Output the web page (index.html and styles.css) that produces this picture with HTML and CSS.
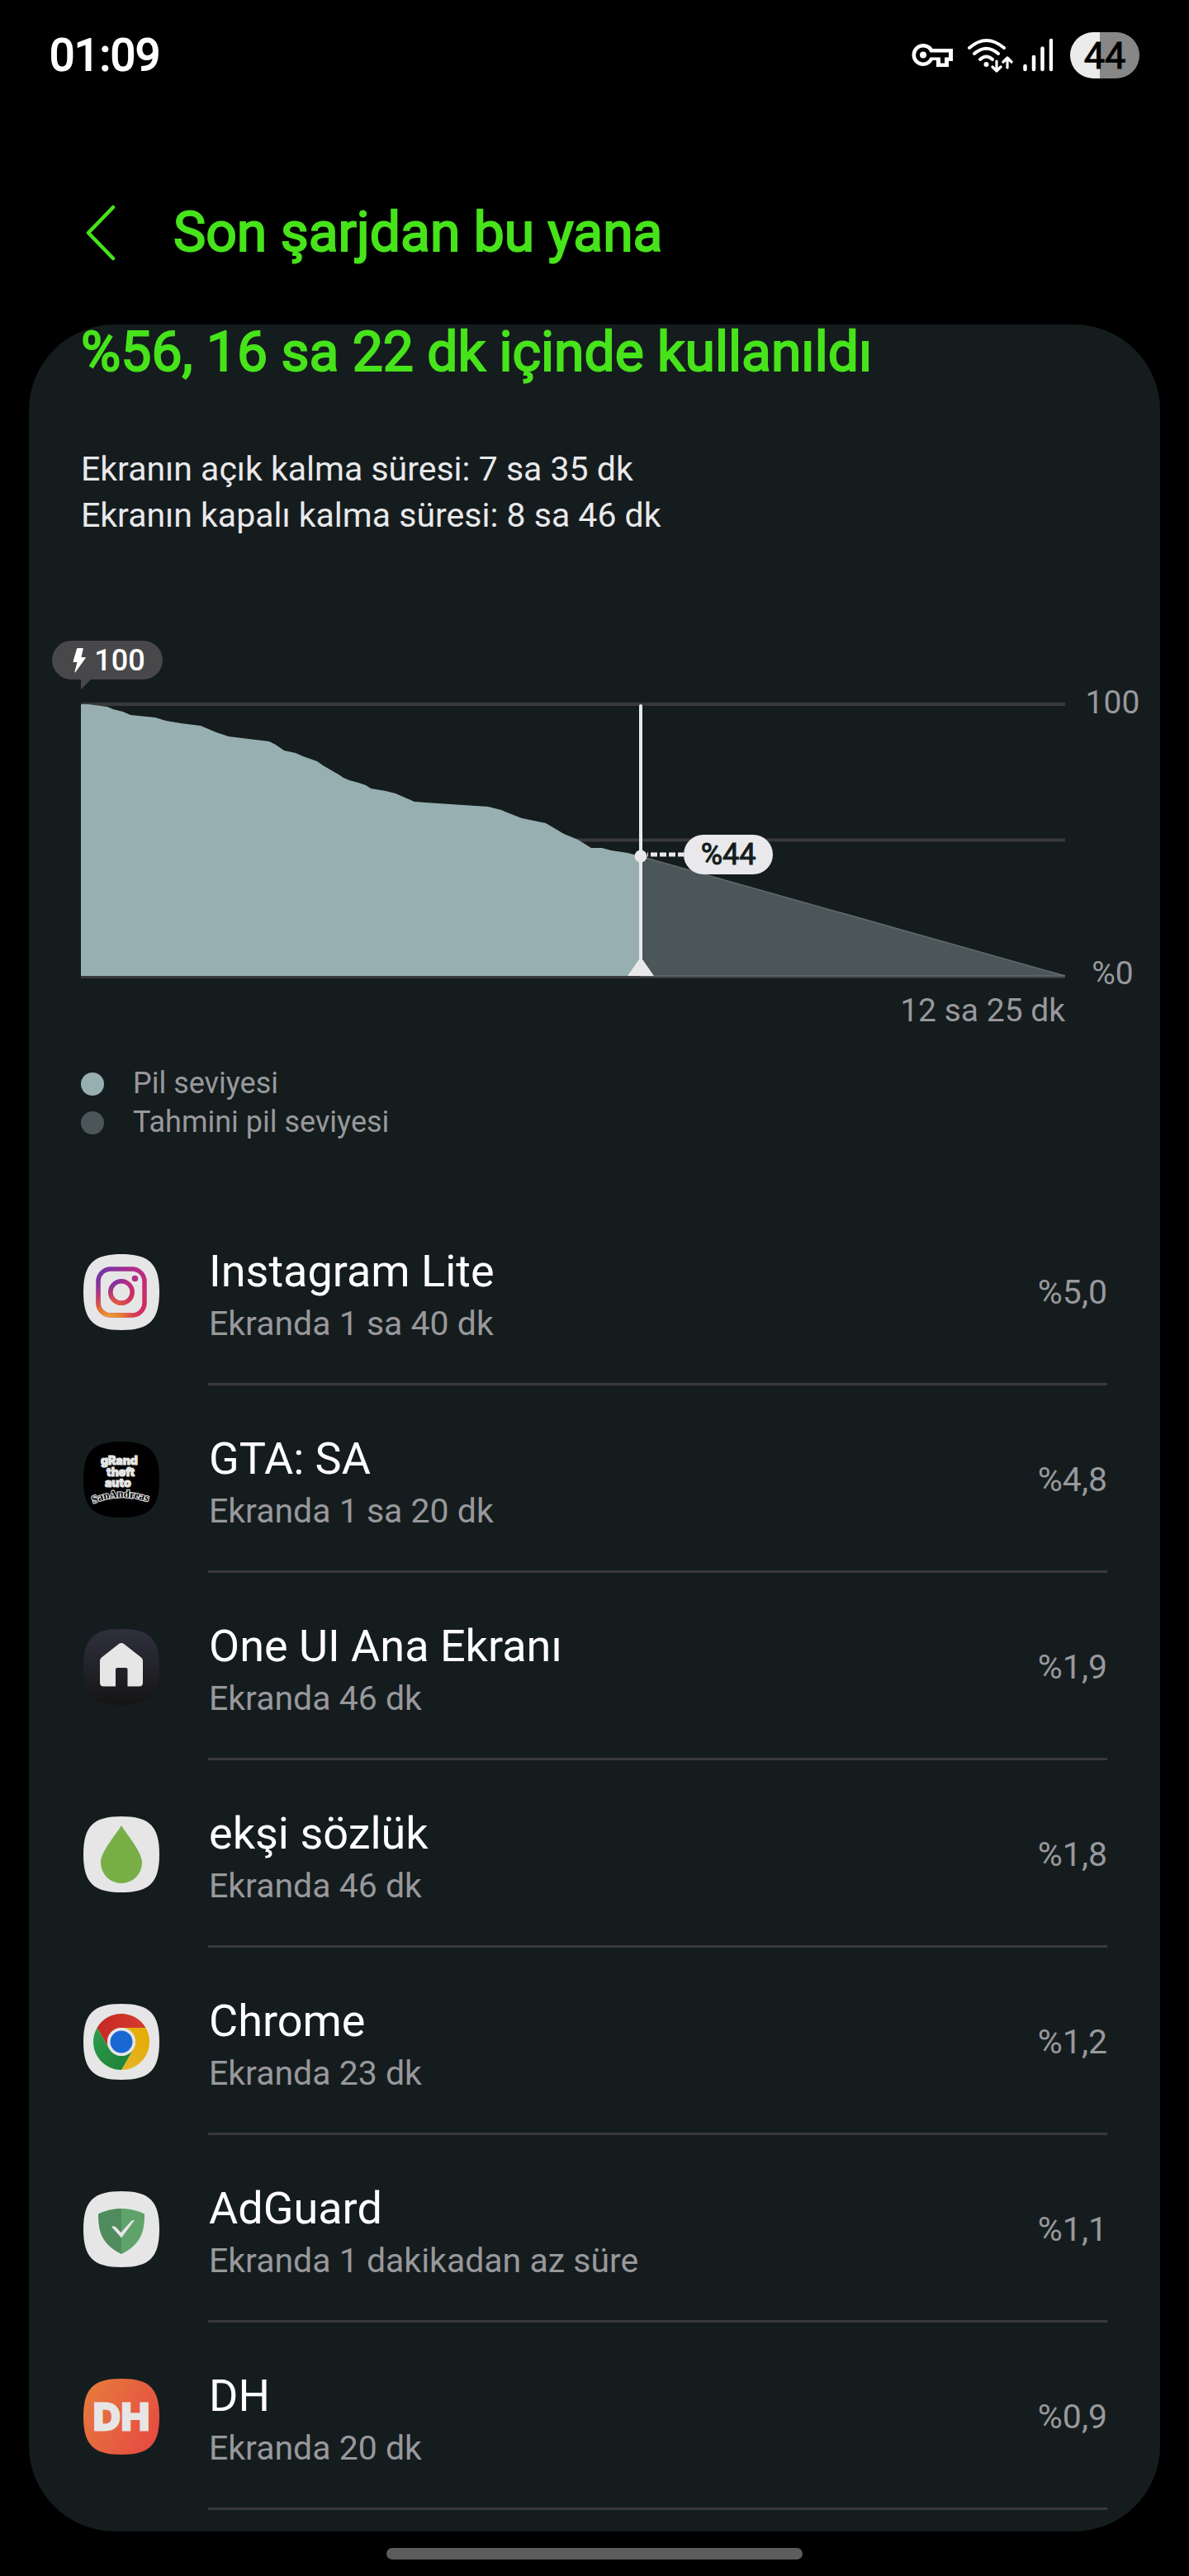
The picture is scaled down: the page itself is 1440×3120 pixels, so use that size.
FILE: index.html
```html
<!DOCTYPE html>
<html lang="tr">
<head>
<meta charset="utf-8">
<meta name="viewport" content="width=device-width, initial-scale=1">
<title>Son şarjdan bu yana</title>
<link rel="stylesheet" href="styles.css">
</head>
<body>
<div class="screen">
  <header class="status">
    <time class="clock">01:09</time>
    <div class="status-icons">
      <svg class="icon-key" viewBox="0 0 50 30" width="50" height="30" aria-hidden="true">
        <path fill="#fff" fill-rule="evenodd" d="M14 1c5 0 9.500 2.500 11.500 6H50v15h-5v7H30v-8h-4.500C23.500 25 19 28 14 28A13.500 13.500 0 0 1 14 1zM14 5.500a9 9 0 1 0 8.500 12H35v7h5V17.500h5V11.500H22.500A9 9 0 0 0 14 5.500z"/>
        <circle cx="14" cy="14.500" r="4" fill="#fff"/>
      </svg>
      <svg class="icon-wifi" viewBox="0 0 56 42" width="56" height="42" aria-hidden="true">
        <g fill="none" stroke="#fff" stroke-width="4" stroke-linecap="round">
          <path d="M3 12Q23.500-6 45 12M9 19Q23.500 6.500 38 19M16 26Q23.500 19 31 26"/>
          <path stroke-width="3.200" stroke-linejoin="round" d="M36 28v12m-5-5l5 5 5-5M49 36V24m-5 5l5-5 5 5"/>
        </g>
        <circle cx="23.500" cy="32" r="3" fill="#fff"/>
      </svg>
      <svg class="icon-signal" viewBox="0 0 36 42" width="36" height="42" aria-hidden="true">
        <path d="M2.500 34v4M13 23v15M23.500 12.500V38M34 3v35" stroke="#fff" stroke-width="4.500" stroke-linecap="round"/>
      </svg>
      <span class="battery">44</span>
    </div>
  </header>

  <div class="appbar">
    <button class="back" type="button" aria-label="Geri">
      <svg viewBox="0 0 40 68" width="40" height="68" aria-hidden="true"><path d="M37 3L7 34l30 31" fill="none" stroke="#47e31b" stroke-width="4.500" stroke-linecap="round" stroke-linejoin="round"/></svg>
    </button>
    <h1 class="title">Son şarjdan bu yana</h1>
  </div>

  <main class="card">
    <h2 class="title">%56, 16 sa 22 dk içinde kullanıldı</h2>
    <div class="times">
      <p>Ekranın açık kalma süresi: 7 sa 35 dk</p>
      <p>Ekranın kapalı kalma süresi: 8 sa 46 dk</p>
    </div>

    <section class="chart">
      <div class="plot">
        <svg class="plot-svg" viewBox="0 0 1192 333" role="img" aria-label="Pil seviyesi grafiği">
          <path d="M0 2H1192M0 166.500H1192M0 332H1192" stroke="#39393b" stroke-width="4"/>
          <path fill="#97afb1" d="M0 2H9L32 5 39 8 51 11 60 15 90 18 103 22 121 25 145 28 164 36 179 41 228 47 236 51 246 58 260 61 269 65 286 71 293 76 312 87 318 91 325 94 336 97 345 100 351 104 369 107 381 110 404 120 447 123 493 126 509 130 516 133 534 140 563 146 585 159 602 166 618 176 631 176 642 179 662 182 677 186V331H0z"/>
          <path fill="#4a5657" d="M677 186L1192 331H677z"/>
          <path d="M677 186L1192 331H677" fill="none" stroke="#5f6b6c" stroke-width="1.500"/>
          <path d="M678 4V312" stroke="#e9e9eb" stroke-width="4" stroke-linecap="round"/>
          <path fill="#e9e9eb" d="M678 308L694 331H662z"/>
          <circle cx="678" cy="186" r="7.500" fill="#e9e9eb"/>
          <path d="M686 184H730" stroke="#e9e9eb" stroke-width="5" stroke-dasharray="8 3" stroke-dashoffset="7"/>
        </svg>
        <span class="bubble">
          <svg viewBox="0 0 16 30" width="16" height="30" aria-hidden="true"><path fill="#fff" d="M6 0h6q1 0 .7 1L10.500 11H15q1 0 .5 1.200L3.500 29q-1.300 1-1-.5L5.500 17H1.500Q.3 17 .6 15.800L5 .8Q5.300 0 6 0z"/></svg>100
        </span>
        <span class="now">%44</span>
      </div>
      <div class="axis"><span>100</span><span>%0</span></div>
      <p class="remaining">12 sa 25 dk</p>
    </section>

    <ul class="legend">
      <li><span class="dot"></span>Pil seviyesi</li>
      <li><span class="dot dot-estimate"></span>Tahmini pil seviyesi</li>
    </ul>

    <ul class="apps">
      <li class="app">
        <svg class="app-icon" viewBox="0 0 92 92" aria-hidden="true">
          <defs>
            <linearGradient id="igBase" x1="0" y1="0" x2="1" y2="1"><stop offset="0" stop-color="#6a36a8"/><stop offset=".4" stop-color="#b42d88"/><stop offset="1" stop-color="#d62c5a"/></linearGradient>
            <radialGradient id="igWarm" gradientUnits="userSpaceOnUse" cx="32" cy="80" r="44"><stop offset="0" stop-color="#eaa83c"/><stop offset=".4" stop-color="#e5742f"/><stop offset="1" stop-color="#d62c5a" stop-opacity="0"/></radialGradient>
          </defs>
          <path fill="#e6e6e6" d="M46 0C80 0 92 12 92 46S80 92 46 92 0 80 0 46 12 0 46 0z"/>
          <g fill="none" stroke="url(#igBase)" stroke-width="5.500"><rect x="18" y="18" width="56" height="56" rx="15"/><circle cx="46" cy="46" r="13.200"/></g>
          <g fill="none" stroke="url(#igWarm)" stroke-width="5.500"><rect x="18" y="18" width="56" height="56" rx="15"/><circle cx="46" cy="46" r="13.200"/></g>
          <circle cx="62.500" cy="29.500" r="3.800" fill="#b42d88"/>
        </svg>
        <div class="app-text"><h3>Instagram Lite</h3><p>Ekranda 1 sa 40 dk</p></div>
        <span class="share">%5,0</span>
      </li>
      <li class="app">
        <svg class="app-icon" viewBox="0 0 92 92" aria-hidden="true">
          <path fill="#000" d="M46 0C80 0 92 12 92 46S80 92 46 92 0 80 0 46 12 0 46 0z"/>
          <g class="gta-text"><text x="21" y="28">gRand</text><text x="28" y="42">theft</text><text x="26" y="55">auto</text></g>
          <path id="arc" fill="none" d="M12 75Q46 60 84 75"/>
          <text class="gta-sub"><textPath href="#arc">SanAndreas</textPath></text>
        </svg>
        <div class="app-text"><h3>GTA: SA</h3><p>Ekranda 1 sa 20 dk</p></div>
        <span class="share">%4,8</span>
      </li>
      <li class="app">
        <svg class="app-icon" viewBox="0 0 92 92" aria-hidden="true">
          <defs><linearGradient id="home" x1="0" y1="0" x2="0" y2="1"><stop offset="0" stop-color="#30303e"/><stop offset="1" stop-color="#151515"/></linearGradient></defs>
          <path fill="url(#home)" d="M46 0C80 0 92 12 92 46S80 92 46 92 0 80 0 46 12 0 46 0z"/>
          <path fill="#e6e6e6" d="M43 18q3-2 6 0L70 34.500q2 1.500 2 4V65q0 4.500-4.500 4.500H53.500V49q0-2-2-2H41q-2 0-2 2V69.500H24.500Q20 69.500 20 65V38.500q0-2.500 2-4z"/>
        </svg>
        <div class="app-text"><h3>One UI Ana Ekranı</h3><p>Ekranda 46 dk</p></div>
        <span class="share">%1,9</span>
      </li>
      <li class="app">
        <svg class="app-icon" viewBox="0 0 92 92" aria-hidden="true">
          <path fill="#e6e6e6" d="M46 0C80 0 92 12 92 46S80 92 46 92 0 80 0 46 12 0 46 0z"/>
          <path fill="#77af46" d="M46 11C54 24 71 43 71 56A25 25 0 0 1 21 56C21 43 38 24 46 11z"/>
        </svg>
        <div class="app-text"><h3>ekşi sözlük</h3><p>Ekranda 46 dk</p></div>
        <span class="share">%1,8</span>
      </li>
      <li class="app">
        <svg class="app-icon" viewBox="0 0 92 92" aria-hidden="true">
          <defs>
            <linearGradient id="cr" x1="0" y1="0" x2="1" y2="0"><stop offset="0" stop-color="#c52a23"/><stop offset="1" stop-color="#d63a2f"/></linearGradient>
            <linearGradient id="cg" x1="1" y1="1" x2="0" y2="0"><stop offset="0" stop-color="#1b8036"/><stop offset="1" stop-color="#2f9c4c"/></linearGradient>
            <linearGradient id="cy" x1="0" y1="1" x2="1" y2="0"><stop offset="0" stop-color="#e6b62a"/><stop offset="1" stop-color="#e4aa00"/></linearGradient>
          </defs>
          <path fill="#e6e6e6" d="M46 0C80 0 92 12 92 46S80 92 46 92 0 80 0 46 12 0 46 0z"/>
          <path fill="url(#cr)" d="M16.550 29A34 34 0 0 1 75.450 29H46A17 17 0 0 0 31.280 54.500z"/>
          <path fill="url(#cy)" d="M75.450 29A34 34 0 0 1 46 80L60.720 54.500A17 17 0 0 0 46 29z"/>
          <path fill="url(#cg)" d="M46 80A34 34 0 0 1 16.550 29L31.280 54.500A17 17 0 0 0 60.720 54.500z"/>
          <circle cx="46" cy="46" r="17" fill="#e6e6e6"/><circle cx="46" cy="46" r="13.500" fill="#1967d2"/>
        </svg>
        <div class="app-text"><h3>Chrome</h3><p>Ekranda 23 dk</p></div>
        <span class="share">%1,2</span>
      </li>
      <li class="app">
        <svg class="app-icon" viewBox="0 0 92 92" aria-hidden="true">
          <path fill="#e6e6e6" d="M46 0C80 0 92 12 92 46S80 92 46 92 0 80 0 46 12 0 46 0z"/>
          <path fill="#5fa36b" d="M46 21C56 21 66 23.500 74 27.500 74 47 71 64 46 76z"/>
          <path fill="#4f8b5d" d="M46 21C36 21 26 23.500 18 27.500 18 47 21 64 46 76z"/>
          <path fill="#e6e6e6" d="M34 43q3-2 6 1l5.500 6L58 36q2-1.500 4-1L46 56.500z"/>
        </svg>
        <div class="app-text"><h3>AdGuard</h3><p>Ekranda 1 dakikadan az süre</p></div>
        <span class="share">%1,1</span>
      </li>
      <li class="app">
        <svg class="app-icon" viewBox="0 0 92 92" aria-hidden="true">
          <defs><linearGradient id="dh" x1="0" y1=".2" x2="1" y2=".8"><stop offset="0" stop-color="#e67a3c"/><stop offset="1" stop-color="#e64a42"/></linearGradient></defs>
          <path fill="url(#dh)" d="M46 0C80 0 92 12 92 46S80 92 46 92 0 80 0 46 12 0 46 0z"/>
          <text class="dh-text" x="46" y="63" text-anchor="middle">DH</text>
        </svg>
        <div class="app-text"><h3>DH</h3><p>Ekranda 20 dk</p></div>
        <span class="share">%0,9</span>
      </li>
    </ul>
  </main>
  <div class="gesture"></div>
</div>
</body>
</html>
```
FILE: styles.css
```css
* { box-sizing: border-box; margin: 0; padding: 0; }
body { background: #000; color: #e9e9eb; font-family: Roboto, "Noto Sans", sans-serif; }
ul { list-style: none; }
.screen { display: flex; flex-direction: column; min-height: 100vh; }

.status { display: flex; align-items: center; justify-content: space-between; height: 134px; padding: 0 60px; }
.clock { font-size: 54px; line-height: 64px; color: #fff; -webkit-text-stroke: 2px #fff; }
.status-icons { display: flex; align-items: center; }
.icon-wifi { margin-left: 17px; }
.icon-signal { margin-left: 12px; }
.battery { display: flex; align-items: center; justify-content: center; width: 84px; height: 56px; margin-left: 21px; border-radius: 28px; background: linear-gradient(90deg, #ebebeb 36px, #878787 36px); color: #000; font-size: 45px; -webkit-text-stroke: 1px #000; }

.appbar { display: flex; align-items: center; gap: 70px; height: 259px; padding: 36px 100px 0; }
.back { display: flex; border: 0; background: none; cursor: pointer; }
.back svg { display: block; }
.title { font-size: 66px; line-height: 68px; font-weight: 400; color: #47e31b; -webkit-text-stroke: 2px #47e31b; }

.card { margin: 0 35px; padding: 0 64px 26px 63px; border-radius: 104px; background: #151c1e; }
.times { margin-top: 79px; font-size: 41px; line-height: 56px; }

.chart { display: grid; grid-template-columns: 1fr 115px; margin: 199px -64px 0 0; }
.plot { position: relative; }
.plot-svg { display: block; width: 100%; overflow: visible; }
.bubble { position: absolute; left: -35px; bottom: 100%; display: flex; align-items: center; justify-content: center; gap: 10px; width: 134px; height: 47px; margin-bottom: 28px; padding-left: 4px; border-radius: 24px; background: #48484a; color: #fff; font-size: 36px; font-weight: 500; }
.bubble::after { content: ""; position: absolute; left: 35px; top: 100%; border-top: 12px solid #48484a; border-right: 12px solid transparent; }
.now { position: absolute; left: 61%; top: 48%; display: flex; align-items: center; justify-content: center; width: 108px; height: 48px; margin-left: 3px; border-radius: 24px; background: #e9e9eb; color: #151c1e; font-size: 36px; -webkit-text-stroke: 1px #151c1e; }
.axis { display: flex; flex-direction: column; justify-content: space-between; align-items: center; margin: -24px 0 -19px; font-size: 39px; line-height: 48px; color: #98989c; }
.remaining { margin-top: 16px; font-size: 39px; line-height: 48px; color: #98989c; text-align: right; }

.legend { margin-top: 41px; font-size: 36px; line-height: 47px; color: #98989c; }
.legend li { display: flex; align-items: center; gap: 35px; }
.dot { width: 28px; height: 28px; border-radius: 50%; background: #97afb1; }
.dot-estimate { background: #4a5657; }

.apps { margin-top: 68px; }
.app { display: flex; align-items: center; position: relative; height: 227px; padding-left: 3px; }
.app::after { content: ""; position: absolute; left: 154px; right: 0; bottom: 0; height: 3px; background: #39393b; }
.app-icon { width: 92px; height: 92px; }
.app-text { flex: 1; margin-left: 60px; padding-top: 8px; }
.app-text h3 { font-size: 54px; line-height: 60px; font-weight: 400; color: #fff; }
.app-text p { margin-top: 9px; font-size: 41px; line-height: 48px; color: #98989c; }
.share { font-size: 41px; line-height: 48px; color: #98989c; }
.gta-text { font: 900 14px Inter, sans-serif; fill: #e6e6e6; stroke: #e6e6e6; stroke-width: 1; }
.gta-sub { font: 700 13px "Liberation Serif", serif; fill: #000; stroke: #e6e6e6; stroke-width: 2; paint-order: stroke; }
.dh-text { font: 900 47px Inter, sans-serif; fill: #e6e6e6; stroke: #e6e6e6; stroke-width: 1; }

.gesture { width: 35%; height: 14px; margin: 20px auto 19px; border-radius: 7px; background: #5c5c5c; }
```
